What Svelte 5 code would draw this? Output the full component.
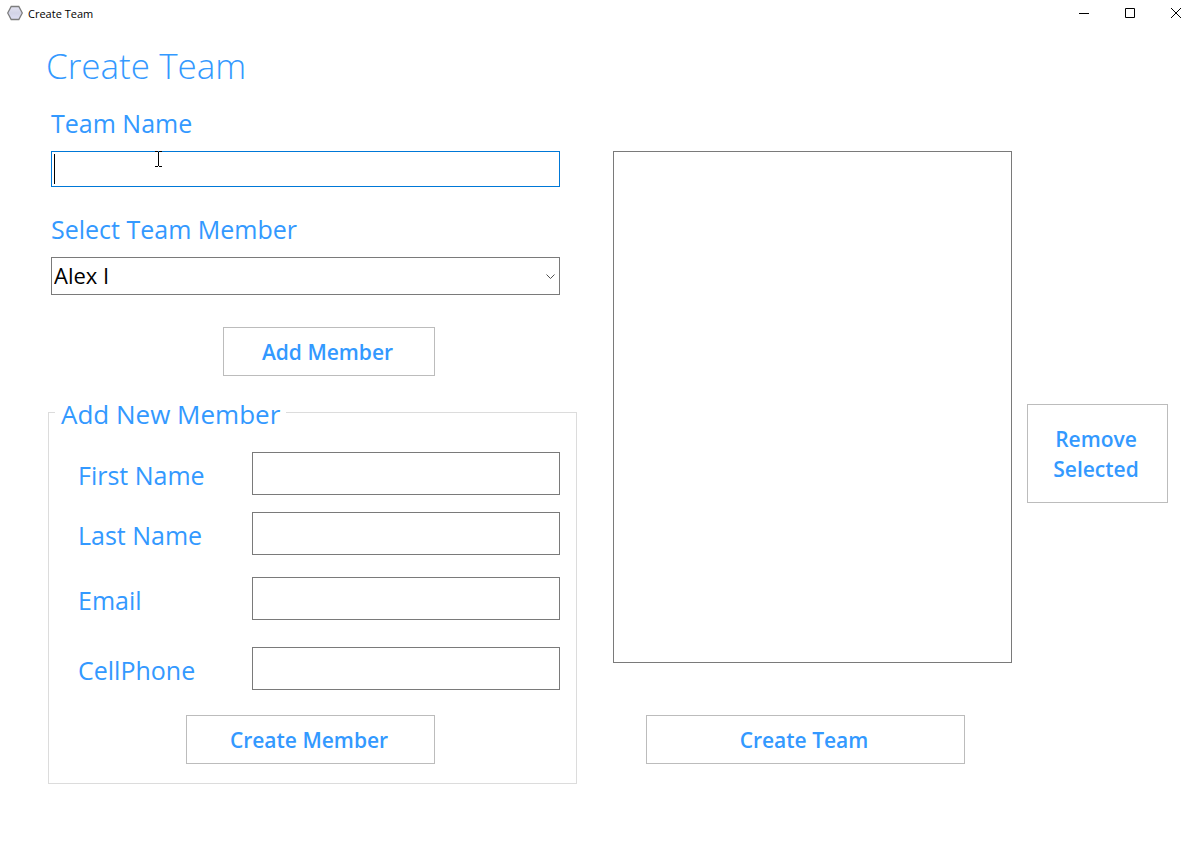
<script>
  const members = ['Alex I'];
  let teamName = $state('');
  let selectedMember = $state(members[0]);
  let fields = $state([
    { id: 'first-name', label: 'First Name', type: 'text', value: '' },
    { id: 'last-name', label: 'Last Name', type: 'text', value: '' },
    { id: 'email', label: 'Email', type: 'email', value: '' },
    { id: 'cellphone', label: 'CellPhone', type: 'tel', value: '' }
  ]);
</script>

<div class="window">
  <header class="titlebar">
    <svg class="app-icon" width="16" height="16" viewBox="0 0 16 16" aria-hidden="true">
      <defs>
        <linearGradient id="hex" x1="0" y1="0" x2="0" y2="1">
          <stop offset="0" stop-color="#e4e4f2" />
          <stop offset="0.5" stop-color="#d2d3e6" />
          <stop offset="1" stop-color="#dedff4" />
        </linearGradient>
      </defs>
      <path d="M4.2 1.5h7.6L15.3 8l-3.5 6.5H4.2L.7 8z" fill="url(#hex)" stroke="#7d7d7d" stroke-width="1.3" />
    </svg>
    <span class="caption">Create Team</span>
    <button class="sys" aria-label="Minimize">
      <svg width="12" height="10" viewBox="0 0 12 10"><path d="M1 5.5h10" /></svg>
    </button>
    <button class="sys" aria-label="Maximize">
      <svg width="10" height="10" viewBox="0 0 10 10"><path d="M.5 .5h9v9h-9z" /></svg>
    </button>
    <button class="sys" aria-label="Close">
      <svg width="10" height="10" viewBox="0 0 10 10"><path d="M0 0l10 10M10 0L0 10" /></svg>
    </button>
  </header>

  <h1>Create Team</h1>

  <main>
    <section class="left">
      <div class="pick">
        <label for="team-name">Team Name</label>
        <div class="text-wrap">
          <input id="team-name" class="team-name" type="text" bind:value={teamName} />
          <span class="caret"></span>
          <svg class="pointer" width="7" height="16" viewBox="0 0 7 16" aria-hidden="true">
            <path d="M0 .5h3M4 .5h3M3.5 1v14M0 15.5h3M4 15.5h3" />
          </svg>
        </div>

        <label for="member">Select Team Member</label>
        <div class="select-wrap">
          <select id="member" bind:value={selectedMember}>
            {#each members as member}
              <option>{member}</option>
            {/each}
          </select>
          <svg class="chevron" width="9" height="6" viewBox="0 0 9 6" aria-hidden="true">
            <path d="M.5 .5l4 4 4-4" />
          </svg>
        </div>

        <div class="add-row">
          <button class="btn">Add Member</button>
        </div>
      </div>

      <fieldset>
        <legend>Add New Member</legend>
        {#each fields as field}
          <div class="row">
            <label for={field.id}>{field.label}</label>
            <input id={field.id} type={field.type} bind:value={field.value} />
          </div>
        {/each}
        <div class="create-row">
          <button class="btn">Create Member</button>
        </div>
      </fieldset>
    </section>

    <section class="middle">
      <ul class="list" aria-label="Team members"></ul>
      <div class="team-row">
        <button class="btn">Create Team</button>
      </div>
    </section>

    <section class="right">
      <button class="btn remove">Remove Selected</button>
    </section>
  </main>
</div>

<style>
  :global(body) {
    margin: 0;
    background: #fff;
  }
  .window {
    min-height: 100vh;
    box-sizing: border-box;
    font-family: 'Open Sans', 'Noto Sans', sans-serif;
    color: #3399ff;
  }
  .window *,
  .window *::before {
    box-sizing: border-box;
  }
  .titlebar {
    display: flex;
    align-items: center;
    height: 28px;
    padding: 0 0 2px 7px;
    color: #000;
  }
  .app-icon {
    margin-right: 5px;
  }
  .caption {
    flex: 1;
    padding-top: 2px;
    font-size: 11px;
    line-height: 24px;
  }
  .sys {
    display: flex;
    align-items: center;
    justify-content: center;
    width: 46px;
    height: 26px;
    padding: 0;
    border: 0;
    background: none;
  }
  .sys svg {
    fill: none;
    stroke: #000;
    stroke-width: 1;
  }
  h1 {
    margin: 12px 48px 15px 46px;
    font-size: 35px;
    line-height: 51px;
    font-weight: 300;
  }
  main {
    display: grid;
    grid-template-columns: 550fr 399fr 141fr;
    gap: 15px;
    padding: 0 31px 48px 48px;
  }
  .left {
    padding-right: 21px;
  }
  .pick {
    display: flex;
    flex-direction: column;
    padding: 0 17px 0 3px;
  }
  label,
  legend {
    font-size: 25px;
    line-height: 34px;
    white-space: nowrap;
  }
  input,
  select {
    display: block;
    width: 100%;
    margin: 0;
    border: 1px solid #7a7a7a;
    border-radius: 0;
    background: #fff;
    color: #000;
    font-family: inherit;
    font-size: 22px;
    outline: none;
  }
  .text-wrap,
  .select-wrap {
    position: relative;
    margin-top: 11px;
  }
  .text-wrap {
    margin-bottom: 25px;
  }
  .team-name {
    height: 36px;
    padding: 0 3px;
    border-color: #0078d7;
  }
  .caret {
    position: absolute;
    left: 3px;
    top: 3px;
    width: 1px;
    height: 30px;
    background: #000;
  }
  .pointer {
    position: absolute;
    left: 104px;
    top: 0;
    fill: none;
    stroke: #000;
  }
  select {
    height: 38px;
    padding: 0 24px 2px 2px;
    appearance: none;
  }
  .chevron {
    position: absolute;
    right: 5px;
    top: 17px;
    fill: none;
    stroke: #505050;
  }
  .btn {
    grid-column: 2;
    min-height: 49px;
    padding: 0 10px 0 7px;
    border: 1px solid #bcbcbc;
    background: #fff;
    color: #3399ff;
    font-family: inherit;
    font-size: 21px;
    line-height: 30px;
    font-weight: 600;
  }
  .add-row {
    display: grid;
    grid-template-columns: 172fr 212fr 125fr;
    margin-top: 32px;
  }
  fieldset {
    min-width: 0;
    margin: 21px 0 0;
    padding: 25px 16px 19px 28px;
    border: 1px solid #dcdcdc;
  }
  legend {
    height: 30px;
    margin-left: -22px;
    padding: 0 6px;
    font-size: 26px;
  }
  .row {
    display: grid;
    grid-template-columns: 175fr 308fr;
    align-items: center;
    margin-bottom: 17px;
  }
  .row:nth-of-type(2) {
    margin-bottom: 22px;
  }
  .row:nth-of-type(3) {
    margin-bottom: 27px;
  }
  .row:nth-of-type(4) {
    margin-bottom: 25px;
  }
  .row label {
    padding: 2px 0 0 1px;
  }
  .row input {
    height: 43px;
    padding: 0 4px;
  }
  .create-row {
    display: grid;
    grid-template-columns: 109fr 249fr 125fr;
  }
  .middle {
    display: flex;
    flex-direction: column;
    padding: 45px 0 20px;
  }
  .list {
    flex: 1;
    margin: 0 0 52px;
    padding: 0;
    border: 1px solid #7a7a7a;
    list-style: none;
  }
  .team-row {
    display: grid;
    grid-template-columns: 33fr 319fr 47fr;
  }
  .right {
    padding-top: 298px;
  }
  .remove {
    width: 100%;
    min-height: 99px;
  }
</style>
